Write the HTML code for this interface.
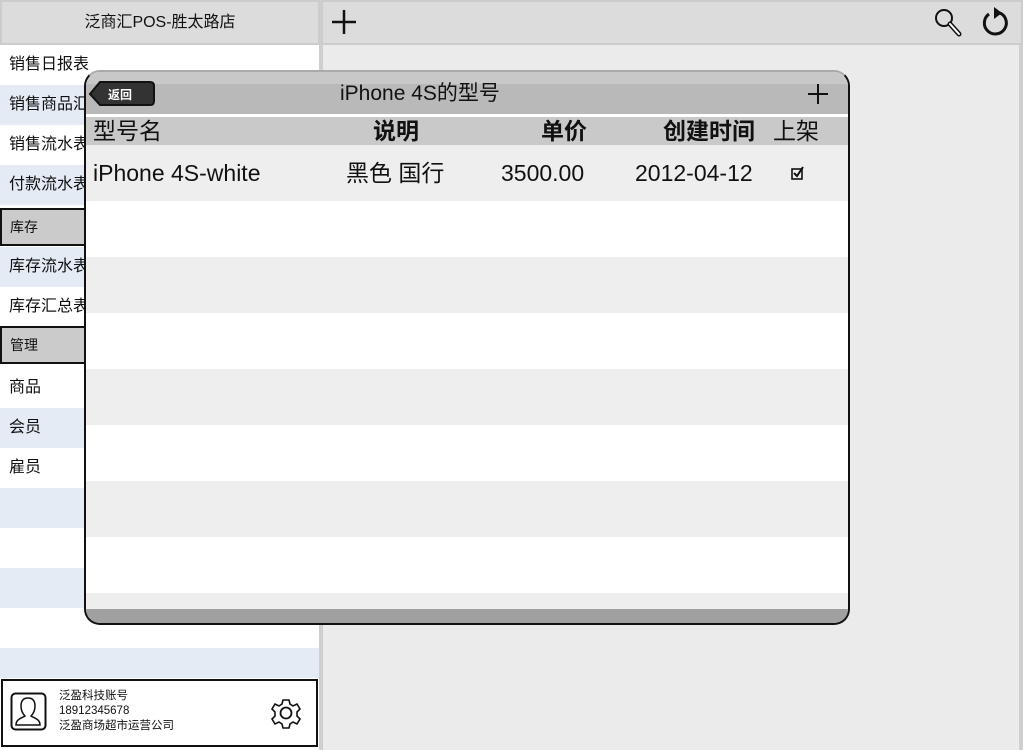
<!DOCTYPE html>
<html><head><meta charset="utf-8"><style>
*{margin:0;padding:0;box-sizing:border-box}
body{width:1023px;height:750px;background:#ebebeb;font-family:"Liberation Sans","Noto Sans CJK SC",sans-serif;position:relative;overflow:hidden;color:#111}
.abs{position:absolute}
.hdr{background:#dcdcdc;border:2px solid #ccc}
.row{position:absolute;left:0;width:319px;height:40px;font-size:16px;line-height:40px;padding-left:9px}
.b{background:#e4ebf5}
.sec{position:absolute;left:0;width:319px;height:38px;background:#cbcbcb;border:2px solid #111;font-size:14px;line-height:34px;padding-left:8px}
.tr{position:absolute;left:0;width:100%;height:56px}
</style></head><body>
<div class="abs" style="left:0;top:0;width:319px;height:750px;background:#fff"></div>
<div class="abs" style="left:319px;top:0;width:4px;height:750px;background:#cfcfcf"></div>
<div class="abs" style="left:1019px;top:0;width:4px;height:750px;background:#cfcfcf"></div>
<div class="abs hdr" style="left:0;top:0;width:320px;height:45px;font-size:16px;text-align:center;line-height:41px">泛商汇POS-胜太路店</div>
<div class="abs hdr" style="left:321px;top:0;width:702px;height:45px"></div>
<svg class="abs" style="left:330px;top:8px" width="28" height="28"><path d="M14 2V26M2 14H26" stroke="#111" stroke-width="2.5"/></svg>
<svg class="abs" style="left:932px;top:6px" width="32" height="32"><circle cx="12" cy="12" r="8" fill="none" stroke="#111" stroke-width="2"/><path d="M18 18L27 28" stroke="#111" stroke-width="5" stroke-linecap="round"/><path d="M18 18L27 28" stroke="#fff" stroke-width="2" stroke-linecap="round"/></svg>
<svg class="abs" style="left:978px;top:5px" width="34" height="34"><path d="M11 9A11 11 0 1 0 22 8" fill="none" stroke="#111" stroke-width="3"/><path d="M16 2L24 8L16 14Z" fill="#111"/></svg>
<div class="row" style="top:45px">销售日报表</div>
<div class="row b" style="top:85px">销售商品汇</div>
<div class="row" style="top:125px">销售流水表</div>
<div class="row b" style="top:165px">付款流水表</div>
<div class="sec" style="top:208px">库存</div>
<div class="row b" style="top:247px">库存流水表</div>
<div class="row" style="top:287px">库存汇总表</div>
<div class="sec" style="top:326px">管理</div>
<div class="row" style="top:368px">商品</div>
<div class="row b" style="top:408px">会员</div>
<div class="row" style="top:448px">雇员</div>
<div class="row b" style="top:488px"></div>
<div class="row b" style="top:568px"></div>
<div class="row b" style="top:648px;height:30px"></div>
<div class="abs" style="left:1px;top:679px;width:317px;height:68px;background:#fff;border:2px solid #111"></div>
<svg class="abs" style="left:10px;top:692px" width="38" height="40"><rect x="1.5" y="1.5" width="34" height="36" rx="4" fill="none" stroke="#111" stroke-width="2"/><path d="M6 33C6 27 12 26 15 24C13 22 11 19 11 14C11 8 14 6 18 6C22 6 25 8 25 14C25 19 23 22 21 24C24 26 30 27 30 33Z" fill="none" stroke="#111" stroke-width="1.5"/></svg>
<div class="abs" style="left:59px;top:689px;font-size:11.5px;line-height:15px">泛盈科技账号<br>18912345678<br>泛盈商场超市运营公司</div>
<svg class="abs" style="left:270px;top:697px" width="32" height="32" viewBox="0 0 32 32"><path d="M13 3h6l1 4 3 2 4-2 3 5-3 3v4l3 3-3 5-4-2-3 2-1 4h-6l-1-4-3-2-4 2-3-5 3-3v-4l-3-3 3-5 4 2 3-2z" fill="none" stroke="#111" stroke-width="1.6"/><circle cx="16" cy="16" r="5.5" fill="none" stroke="#111" stroke-width="1.8"/></svg>

<div class="abs" style="left:84px;top:70px;width:766px;height:555px;border-radius:16px;overflow:hidden;background:#fff;border:2px solid #111;border-top-color:#aaa">
 <div class="abs" style="left:0;top:0;width:100%;height:42px;background:linear-gradient(#c8c8c8 0,#c8c8c8 12px,#b9b9b9 12px)"></div>
 <div class="abs" style="left:0;top:42px;width:100%;height:3px;background:#fff"></div>
 <svg class="abs" style="left:2px;top:8px" width="68" height="28"><path d="M12 2H62Q66 2 66 6V21Q66 25 62 25H12L2 14Z" fill="#333" stroke="#111" stroke-width="2"/><text x="20" y="19" fill="#fff" font-size="12" font-weight="bold" font-family="Liberation Sans,Noto Sans CJK SC,sans-serif">返回</text></svg>
 <div class="abs" style="left:254px;top:5px;font-size:21px;white-space:nowrap">iPhone 4S的型号</div>
 <svg class="abs" style="left:720px;top:10px" width="24" height="24"><path d="M12 2V22M2 12H22" stroke="#111" stroke-width="2"/></svg>
 <div class="abs" style="left:0;top:45px;width:100%;height:28px;background:#c9c9c9;font-size:23px;line-height:28px;white-space:nowrap">
  <span class="abs" style="left:7px">型号名</span>
  <span class="abs" style="left:287px;font-weight:bold">说明</span>
  <span class="abs" style="left:455px;font-weight:bold">单价</span>
  <span class="abs" style="left:577px;font-weight:bold">创建时间</span>
  <span class="abs" style="left:687px">上架</span>
 </div>
 <div class="tr" style="top:73px;background:#eee;font-size:23px;line-height:56px;white-space:nowrap">
  <span class="abs" style="left:7px">iPhone 4S-white</span>
  <span class="abs" style="left:260px">黑色 国行</span>
  <span class="abs" style="left:415px">3500.00</span>
  <span class="abs" style="left:549px">2012-04-12</span>
  <svg class="abs" style="left:705px;top:21px" width="14" height="14"><rect x="1" y="3" width="10" height="10" fill="none" stroke="#111" stroke-width="1.6"/><path d="M3 7L6 10L12 1" fill="none" stroke="#111" stroke-width="2"/></svg>
 </div>
 <div class="tr" style="top:185px;background:#eee"></div>
 <div class="tr" style="top:297px;background:#eee"></div>
 <div class="tr" style="top:409px;background:#eee"></div>
 <div class="tr" style="top:521px;height:18px;background:#eee"></div>
 <div class="abs" style="left:0;top:537px;width:100%;height:20px;background:#a0a0a0"></div>
</div>
</body></html>
